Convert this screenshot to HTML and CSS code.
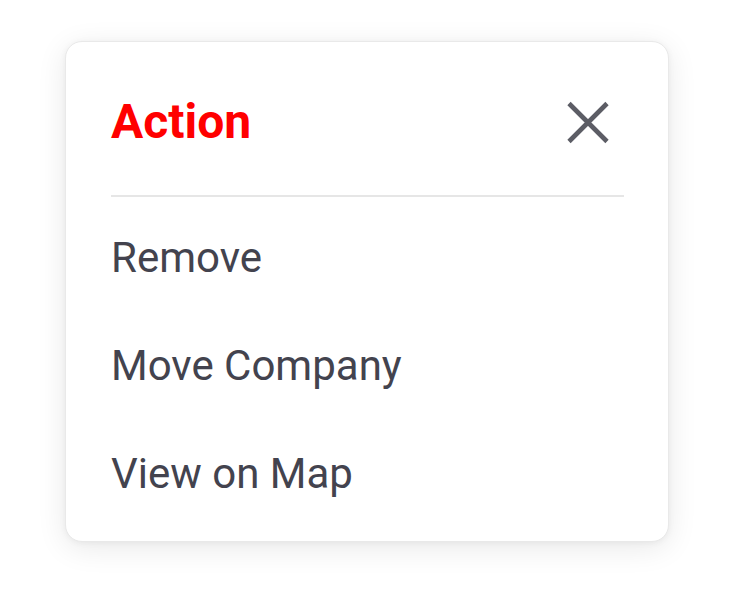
FILE: index.html
```html
<!DOCTYPE html>
<html lang="en">
<head>
<meta charset="utf-8">
<title>Action</title>
<link rel="stylesheet" href="styles.css">
</head>
<body>
  <div class="sheet">
    <div class="sheet-header">
      <h1 class="sheet-title">Action</h1>
      <button class="close-btn" aria-label="Close">
        <svg width="48" height="48" viewBox="0 0 48 48" aria-hidden="true">
          <path d="M5 5.5 L43 43.5 M43 5.5 L5 43.5" stroke="#5c5d65" stroke-width="4.6" fill="none"/>
        </svg>
      </button>
    </div>
    <div class="divider"></div>
    <ul class="menu">
      <li class="menu-item">Remove</li>
      <li class="menu-item">Move Company</li>
      <li class="menu-item">View on Map</li>
    </ul>
  </div>
</body>
</html>
```
FILE: styles.css
```css
html, body {
  margin: 0;
  background: #ffffff;
}
body {
  box-sizing: border-box;
  min-height: 594px;
  padding: 41px 0 52px 65px;
  font-family: Roboto, "Liberation Sans", sans-serif;
}
.sheet {
  box-sizing: border-box;
  width: 604px;
  background: #ffffff;
  border: 1px solid #e9e9e9;
  border-radius: 17px;
  box-shadow: 0 6px 30px rgba(0, 0, 0, 0.09), 0 1px 6px rgba(0, 0, 0, 0.05);
  padding: 52px 44px 13px 45px;
}
.sheet-header {
  display: flex;
  align-items: center;
  justify-content: space-between;
  height: 56px;
}
.sheet-title {
  margin: 0;
  font-size: 48px;
  line-height: 56px;
  font-weight: 700;
  color: #ff0000;
}
.close-btn {
  width: 48px;
  height: 48px;
  margin-right: 12px;
  padding: 0;
  border: 0;
  background: none;
  display: flex;
}
.divider {
  margin-top: 45px;
  height: 2px;
  background: #e6e6e6;
}
.menu {
  list-style: none;
  margin: 7px 0 0;
  padding: 0;
}
.menu-item {
  font-size: 42px;
  line-height: 48px;
  padding: 30px 0;
  color: #43434e;
}
```
